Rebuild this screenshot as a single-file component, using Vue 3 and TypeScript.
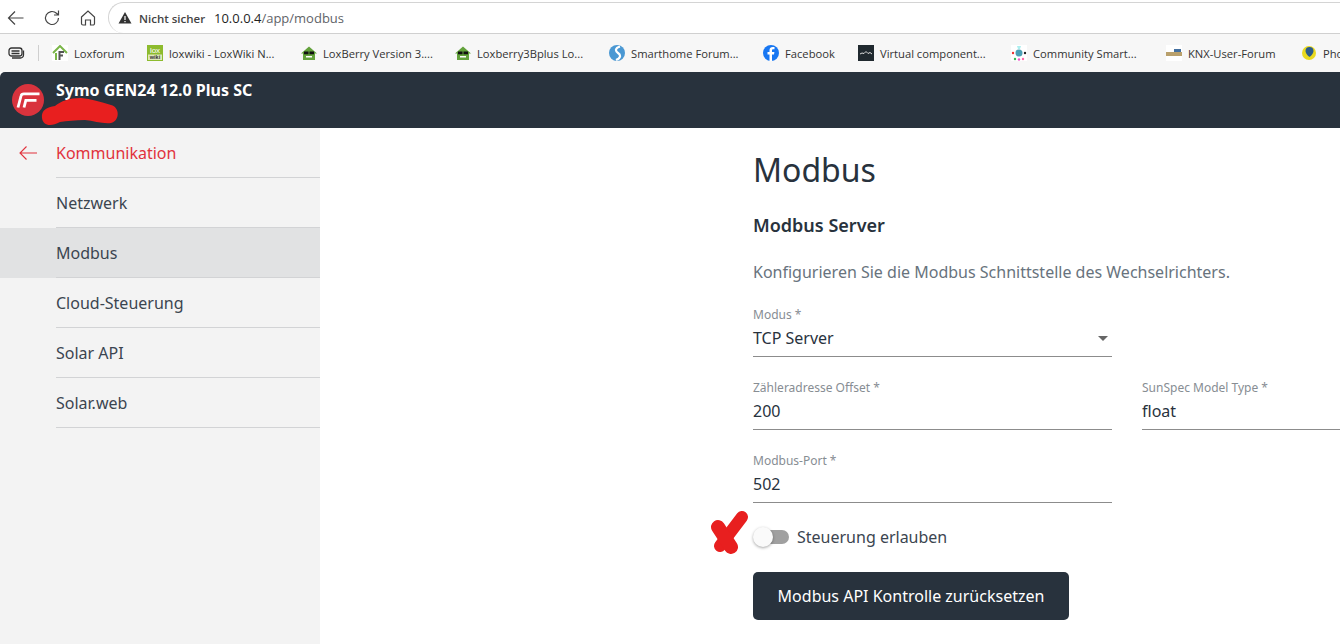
<script setup lang="ts">
const bookmarks = [
  { label: 'Loxforum', icon: 'lf', w: 95 },
  { label: 'loxwiki - LoxWiki N...', icon: 'lw', w: 154 },
  { label: 'LoxBerry Version 3....', icon: 'lb', w: 154 },
  { label: 'Loxberry3Bplus Lo...', icon: 'lb', w: 154 },
  { label: 'Smarthome Forum...', icon: 'sh', w: 154 },
  { label: 'Facebook', icon: 'fb', w: 95 },
  { label: 'Virtual component...', icon: 'vc', w: 153 },
  { label: 'Community Smart...', icon: 'cs', w: 155 },
  { label: 'KNX-User-Forum', icon: 'kn', w: 135 },
  { label: 'Pho', icon: 'ph', w: 39 },
]
const nav = ['Netzwerk', 'Modbus', 'Cloud-Steuerung', 'Solar API', 'Solar.web']
</script>

<template>
  <div class="page">
    <div class="chrome">
      <div class="toolbar">
        <svg class="tb first" width="18" height="18" viewBox="0 0 18 18" fill="none" stroke="#444" stroke-width="1.2"><path d="M16.5 9H1.5M8 2.500L1.500 9L8 15.500"/></svg>
        <svg class="tb" width="18" height="18" viewBox="0 0 18 18" fill="none" stroke="#444" stroke-width="1.2"><path d="M15.500 9a6.500 6.500 0 1 1-2-4.700L15.500 6M15.500 1.500V6H11"/></svg>
        <svg class="tb" width="18" height="18" viewBox="0 0 18 18" fill="none" stroke="#444" stroke-width="1.2"><path d="M2.500 8L9 2l6.500 6v6.500a1.500 1.500 0 0 1-1.500 1.500h-2.500v-5h-5v5H4a1.500 1.500 0 0 1-1.500-1.500z"/></svg>
        <div class="omnibox">
          <svg width="14" height="14" viewBox="0 0 14 14"><path d="M7 1L13.500 12.500H.5z" fill="#333"/><rect x="6.400" y="5" width="1.200" height="4" fill="#fff"/><rect x="6.400" y="10" width="1.200" height="1.200" fill="#fff"/></svg>
          <span class="warn">Nicht sicher</span>
          <span class="url"><span class="host">10.0.0.4</span>/app/modbus</span>
        </div>
      </div>
      <div class="bookmarks">
        <svg class="tabs-icon" width="17" height="14" viewBox="0 0 17 14" fill="none" stroke="#333" stroke-width="1.300"><rect x="1" y="2" width="13" height="8" rx="2.500"/><path d="M3.500 5h8M3.500 7.500h8M15.500 4.500v4.500a3 3 0 0 1-3 3H4"/></svg>
        <span class="bm-sep"></span>
        <div v-for="b in bookmarks" :key="b.label" class="bm" :style="{ width: b.w + 'px' }">
          <span class="fav">
            <svg v-if="b.icon === 'lf'" viewBox="0 0 16 16" width="16" height="16"><rect width="16" height="16" fill="#fff"/><path d="M1 8l7-7 7 7" fill="none" stroke="#7ab648" stroke-width="2"/><path d="M4 8v7" stroke="#7ab648" stroke-width="2"/><path d="M7.500 15V7h4.500M7.500 10.500h3.500" fill="none" stroke="#555" stroke-width="2"/></svg>
            <svg v-else-if="b.icon === 'lw'" viewBox="0 0 16 16" width="16" height="16"><rect width="16" height="16" fill="#8dbb2e"/><text x="8" y="8" text-anchor="middle" font-size="8" font-family="Liberation Sans, sans-serif" fill="#fff">lox</text><rect x="1" y="9.500" width="14" height="5.500" fill="#dfe8b8"/><text x="8" y="14.300" text-anchor="middle" font-size="5.500" font-weight="700" font-family="Liberation Sans, sans-serif" fill="#333">wiki</text></svg>
            <svg v-else-if="b.icon === 'lb'" viewBox="0 0 16 16" width="16" height="16"><path d="M8 1.500L16 8.500h-2V15H2V8.500H0z" fill="#63a23c"/><rect x="3" y="6.500" width="4.500" height="2.800" fill="#111"/><rect x="8.500" y="6.500" width="4.500" height="2.800" fill="#111"/><rect x="5" y="11" width="6" height="1.500" fill="#fff"/></svg>
            <svg v-else-if="b.icon === 'sh'" viewBox="0 0 16 16" width="16" height="16"><circle cx="8" cy="8" r="8" fill="#4a98d3"/><path d="M11 1.500C6 3 6 6 9 8s3 5-2 7" fill="none" stroke="#fff" stroke-width="2.200"/></svg>
            <svg v-else-if="b.icon === 'fb'" viewBox="0 0 16 16" width="16" height="16"><circle cx="8" cy="8" r="8" fill="#1877f2"/><path d="M9 16V9.500h2l.4-2.500H9V5.500c0-.8.4-1.300 1.300-1.300h1.200V2.100S10.500 2 9.700 2C7.900 2 6.500 3 6.500 5.200V7H4.500v2.500h2V16z" fill="#fff"/></svg>
            <svg v-else-if="b.icon === 'vc'" viewBox="0 0 16 16" width="16" height="16"><rect width="16" height="16" fill="#20292f"/><path d="M2 9l2-1 2 .5 2-2 2 2 2-1 2 1.500" fill="none" stroke="#ddd" stroke-width="1"/></svg>
            <svg v-else-if="b.icon === 'cs'" viewBox="0 0 16 16" width="16" height="16"><rect width="16" height="16" fill="#fff"/><circle cx="8" cy="8" r="3.500" fill="#4b9fb5"/><circle cx="2" cy="8" r="1.200" fill="#e33"/><circle cx="14" cy="8" r="1.200" fill="#222"/><circle cx="4" cy="14" r="1.200" fill="#3b5"/><circle cx="8" cy="14.500" r="1.200" fill="#e5c"/><circle cx="12" cy="14" r="1.200" fill="#f6a"/><path d="M6 1h4l-1 3H7z" fill="#aee"/></svg>
            <svg v-else-if="b.icon === 'kn'" viewBox="0 0 16 16" width="16" height="16"><rect width="16" height="16" fill="#fff"/><rect x="0" y="7" width="16" height="4" fill="#b9a06c"/><rect x="8" y="4" width="7" height="3" fill="#4470a0"/></svg>
            <svg v-else viewBox="0 0 16 16" width="16" height="16"><circle cx="8" cy="8" r="7" fill="#eada1e"/><path d="M8.500 2a4 4 0 0 1 4 4c0 3-4 6-4 6s-4-3-4-6a4 4 0 0 1 4-4z" fill="#2d5c8a"/></svg>
          </span>
          <span class="bm-label">{{ b.label }}</span>
        </div>
      </div>
    </div>

    <header class="appbar">
      <span class="logo">
        <svg width="24" height="16" viewBox="0 0 24 16" fill="none" stroke="#fff" stroke-width="2.800"><path d="M2 15.500L5 4Q5.500 1.800 8 1.800H23.500M8 15.500L9.800 8.300H20.500"/></svg>
      </span>
      <div class="device">Symo GEN24 12.0 Plus SC</div>
      <svg class="scribble" width="82" height="30" viewBox="0 0 82 30"><path d="M3 20C2 12 8 9 16 8C22 3 30 0 42 0C52 1 62 4 72 7C81 9 81 23 72 25C64 26 55 23 46 22C36 22 28 23 21 24C12 29 4 28 3 20z" fill="#e81f1f"/></svg>
    </header>

    <div class="body">
      <aside class="sidebar">
        <div class="back">
          <svg class="back-icon" width="18" height="14" viewBox="0 0 18 14" fill="none" stroke="#e1323c" stroke-width="1.100"><path d="M18 7H1M7.500 .5L1 7l6.500 6.500"/></svg>
          <span class="back-label">Kommunikation</span>
        </div>
        <nav class="nav">
          <div v-for="n in nav" :key="n" class="nav-item" :class="{ active: n === 'Modbus' }"><span class="nav-text">{{ n }}</span></div>
        </nav>
      </aside>

      <main class="main">
        <div class="content">
          <h1>Modbus</h1>
          <h2>Modbus Server</h2>
          <p class="desc">Konfigurieren Sie die Modbus Schnittstelle des Wechselrichters.</p>
          <div class="field">
            <label>Modus *</label>
            <div class="value">TCP Server<span class="caret"></span></div>
          </div>
          <div class="row">
            <div class="field">
              <label>Zähleradresse Offset *</label>
              <div class="value">200</div>
            </div>
            <div class="field">
              <label>SunSpec Model Type *</label>
              <div class="value">float</div>
            </div>
          </div>
          <div class="field">
            <label>Modbus-Port *</label>
            <div class="value">502</div>
          </div>
          <div class="toggle-row">
            <svg class="cross" width="44" height="46" viewBox="0 0 44 46" fill="none" stroke="#e81f1f" stroke-linecap="round"><path d="M33 7L11 36" stroke-width="12"/><path d="M9 17L22 37" stroke-width="14"/></svg>
            <span class="switch"><span class="track"></span><span class="thumb"></span></span>
            <span class="toggle-label">Steuerung erlauben</span>
          </div>
          <button class="btn" type="button">Modbus API Kontrolle zurücksetzen</button>
        </div>
      </main>
    </div>
  </div>
</template>

<style>
html, body { margin: 0; padding: 0; overflow: hidden; background: #fff; }
</style>

<style scoped>
.page { width: 1340px; height: 644px; overflow: hidden; display: flex; flex-direction: column; font-family: "Noto Sans", sans-serif; background: #fff; }
.chrome { height: 72px; flex: none; background: #f7f7f7; display: flex; flex-direction: column; }
.toolbar { height: 34px; flex: none; background: #fff; border-bottom: 1px solid #d0d0d0; box-sizing: border-box; display: flex; align-items: center; padding-top: 2px; }
.tb { margin-right: 18px; margin-top: 1px; flex: none; }
.tb.first { margin-left: 7px; }
.omnibox { flex: 1; height: 31px; border: 1px solid #d4d4d4; border-right: none; border-bottom: none; border-radius: 16px 0 0 16px; box-sizing: border-box; display: flex; align-items: center; padding-left: 9px; font-family: "Open Sans", "Noto Sans", sans-serif; background: #fff; margin-left: -7px; }
.warn { margin-left: 7px; color: #444; font-size: 11.500px; font-weight: 600; width: 75px; }
.url { color: #5f6368; font-size: 13px; }
.host { color: #1f1f1f; }
.bookmarks { height: 38px; flex: none; display: flex; align-items: center; font-family: "Open Sans", "Noto Sans", sans-serif; font-size: 11.200px; color: #333; }
.tabs-icon { margin-left: 8px; flex: none; }
.bm-sep { width: 1px; height: 16px; background: #cfcfcf; margin: 0 13px 0 13px; flex: none; }
.bm { display: flex; align-items: center; flex: none; white-space: nowrap; }
.fav { width: 16px; height: 16px; margin-right: 6px; flex: none; display: block; }
.fav svg { display: block; }
.appbar { height: 56px; flex: none; background: #28323d; border-radius: 5px 0 0 0; display: flex; position: relative; color: #fff; }
.logo { width: 32px; height: 32px; border-radius: 50%; background: #d9333d; margin: 12px 0 0 12px; display: flex; align-items: center; justify-content: center; flex: none; }
.device { margin: 7px 0 0 12px; font-size: 16px; font-weight: 700; line-height: 22px; }
.scribble { position: absolute; left: 39px; top: 26px; }
.body { flex: 1; display: flex; min-height: 0; }
.sidebar { width: 320px; flex: none; background: #f3f3f3; }
.back { height: 50px; display: flex; align-items: center; position: relative; padding-left: 56px; box-sizing: border-box; }
.back::after, .nav-item::after { content: ""; position: absolute; left: 56px; right: 0; bottom: 0; height: 1px; background: #d2d3d5; }
.back-icon { position: absolute; left: 19px; top: 18px; }
.back-label { color: #e1323c; font-size: 16px; }
.nav-item { height: 50px; display: flex; align-items: center; padding-left: 56px; box-sizing: border-box; position: relative; font-size: 16px; color: #3b4550; }
.nav-item.active { background: #e1e2e3; }
.main { flex: 1; min-width: 0; overflow: hidden; }
.content { margin-left: 433px; width: 600px; color: #28323d; }
h1 { margin: 0; padding-top: 22px; font-size: 32px; font-weight: 400; line-height: 40px; color: #28323d; }
h2 { margin: 23px 0 0; font-size: 18px; font-weight: 600; line-height: 24px; }
.desc { margin: 23px 0 0; font-size: 16px; line-height: 24px; color: #68737d; }
.field { width: 359px; flex: none; height: 51px; border-bottom: 1px solid #8c8c8c; box-sizing: border-box; margin-top: 22px; position: relative; }
.field label { display: block; font-size: 12px; line-height: 16px; color: #878d93; padding-top: 1px; height: 20px; box-sizing: border-box; }
.value { font-size: 16px; line-height: 24px; color: #28323d; position: relative; }
.caret { position: absolute; right: 4px; top: 10px; width: 0; height: 0; border-left: 5px solid transparent; border-right: 5px solid transparent; border-top: 5px solid #666; }
.row { display: flex; gap: 30px; }
.toggle-row { margin-top: 20px; height: 28px; display: flex; align-items: center; position: relative; }
.cross { position: absolute; left: -44px; top: -13px; }
.switch { width: 36px; height: 20px; position: relative; flex: none; }
.track { position: absolute; left: 1px; top: 3px; width: 35px; height: 14px; border-radius: 7px; background: #a0a0a0; }
.thumb { position: absolute; left: 0; top: 0; width: 20px; height: 20px; border-radius: 50%; background: #fafafa; box-shadow: 0 1px 3px rgba(0,0,0,.35); }
.toggle-label { margin-left: 8px; font-size: 16px; color: #3b4550; }
.btn { display: block; margin-top: 21px; width: 316px; height: 48px; background: #28323d; color: #fff; border: none; border-radius: 5px; font-family: inherit; font-size: 16px; font-weight: 400; padding: 0; }
</style>
